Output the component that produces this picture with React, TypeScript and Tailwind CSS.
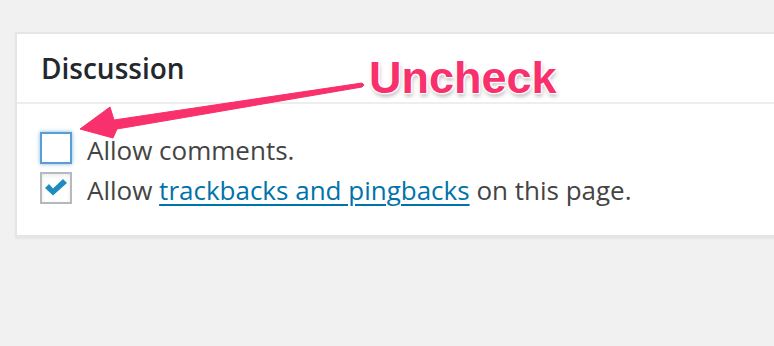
import React from 'react';

const App = () => {
  const rows = [
    { checked: false, focused: true },
    { checked: true, focused: false },
  ];

  return (
    <div className="relative w-[774px] h-[346px] overflow-hidden bg-[#f1f1f1] pt-[32px] pl-[15px] font-['Open_Sans',sans-serif]">
      {/* Discussion box */}
      <div className="w-[800px] bg-white border-2 border-[#e5e5e5] shadow-[0_2px_2px_rgba(0,0,0,0.05)]">
        <div className="h-[70px] flex items-center px-[24px] border-b-2 border-[#eeeeee]">
          <h2 className="text-[28px] font-semibold text-[#23282d] leading-none">Discussion</h2>
        </div>
        <div className="pt-[28px] pb-[31px] pl-[23px] flex flex-col gap-[8px]">
          {rows.map((row, index) => (
            <div key={index} className="flex items-center h-[32px] gap-[15px]">
              <div
                className={
                  row.focused
                    ? 'w-[32px] h-[32px] bg-white border-2 border-[#5b9dd9] shadow-[0_0_4px_rgba(30,140,190,0.6)]'
                    : 'w-[32px] h-[32px] bg-white border-2 border-[#b4b9be] shadow-[inset_0_2px_4px_rgba(0,0,0,0.08)]'
                }
              >
                {row.checked && (
                  <svg width="28" height="28" viewBox="0 0 28 28">
                    <polygon points="3,14 7,10 11,14.5 21,5 25,9 11,21.5" fill="#1e8cbe" />
                  </svg>
                )}
              </div>
              {index === 0 ? (
                <span className="text-[26px] text-[#444] leading-none pt-[4px]">Allow comments.</span>
              ) : (
                <span className="text-[26px] text-[#444] leading-none pt-[4px]">
                  Allow <a href="#" className="text-[#0073aa] underline underline-offset-[4px] decoration-2">trackbacks and pingbacks</a> on this page.
                </span>
              )}
            </div>
          ))}
        </div>
      </div>

      {/* Annotation arrow */}
      <svg className="absolute left-0 top-0 pointer-events-none" width="774" height="346">
        <polygon
          points="80,129 110,107 114,120 362,83 364,85 362,87 117,129 113,138"
          fill="#f8306c"
          stroke="#f8306c"
          strokeWidth="1"
          strokeLinejoin="round"
        />
      </svg>
      <span className="absolute left-[369px] top-[55px] text-[45px] leading-none font-bold text-[#f8306c] font-['Liberation_Sans',Arial,sans-serif] [text-shadow:0_0_2px_#fff,1px_1px_1px_#fff,-1px_-1px_1px_#fff,1px_-1px_1px_#fff,-1px_1px_1px_#fff,0_0_4px_#fff,1px_3px_4px_rgba(0,0,0,0.35)]">
        Uncheck
      </span>
    </div>
  );
};

export default App;
